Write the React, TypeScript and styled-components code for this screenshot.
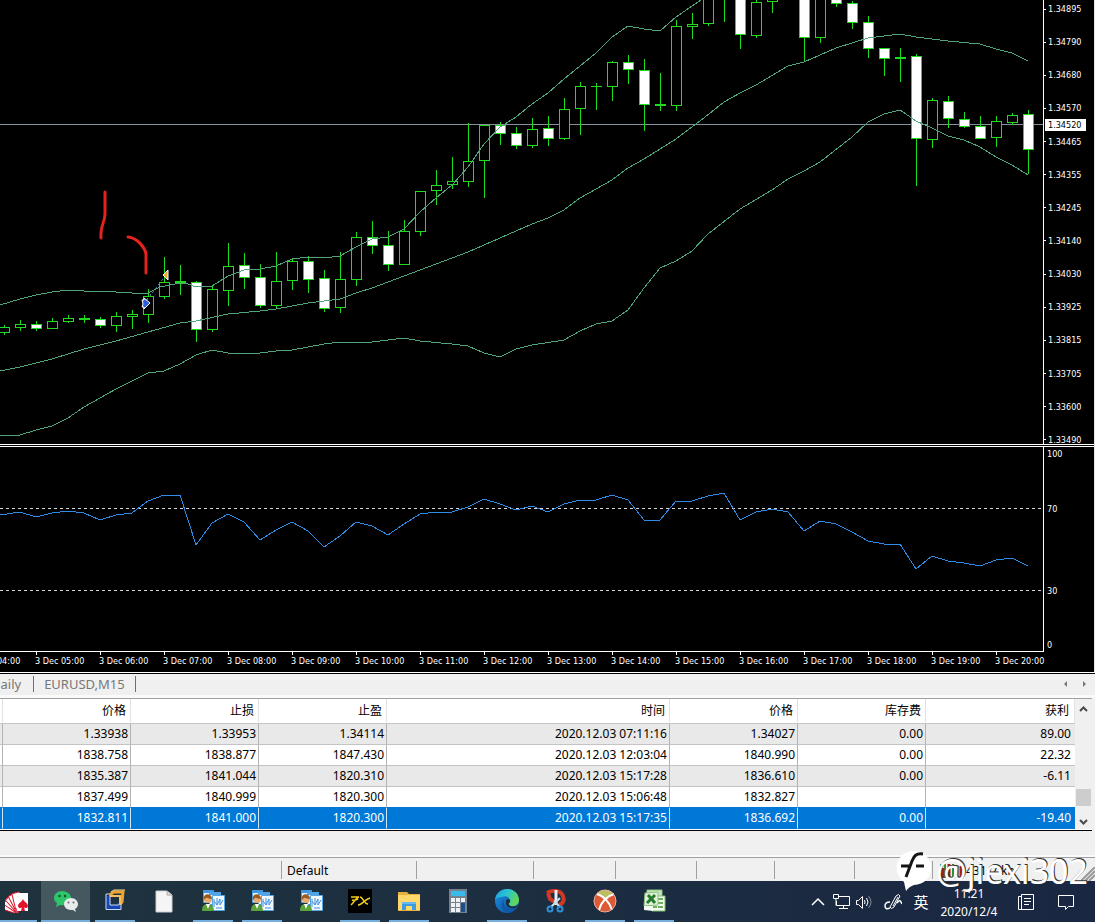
import React from "react";
import styled, { createGlobalStyle } from "styled-components";

const Global = createGlobalStyle`
  *, *::before, *::after { box-sizing: border-box; }
  body {
    margin: 0;
    background: #f0f0f0;
    font-family: "Noto Sans", "Noto Sans CJK SC", sans-serif;
    font-size: 12px;
    color: #000;
  }
  button { font: inherit; color: inherit; background: none; border: 0; padding: 0; margin: 0; }
`;

/* ---------- data ---------- */

type Kind = "up" | "down" | "doji";
type Candle = [x: number, high: number, top: number, bottom: number, low: number, kind: Kind];

const candles: Candle[] = [
  [4, 325, 327, 332, 334, "up"],
  [20, 320, 324, 327, 330, "up"],
  [36, 321, 324, 328, 330, "down"],
  [52, 318, 321, 328, 328, "up"],
  [68, 315, 318, 321, 322, "up"],
  [84, 315, 318, 319, 322, "doji"],
  [100, 317, 319, 325, 327, "down"],
  [116, 312, 316, 325, 331, "up"],
  [132, 310, 314, 316, 328, "up"],
  [148, 289, 296, 314, 322, "up"],
  [164, 257, 282, 296, 298, "up"],
  [180, 265, 281, 282, 294, "doji"],
  [196, 281, 282, 329, 341, "down"],
  [212, 285, 289, 329, 331, "up"],
  [228, 243, 266, 290, 305, "up"],
  [244, 253, 265, 277, 288, "down"],
  [260, 264, 277, 305, 307, "down"],
  [276, 252, 281, 305, 307, "up"],
  [292, 258, 261, 280, 289, "up"],
  [308, 256, 261, 279, 292, "down"],
  [324, 270, 278, 308, 311, "down"],
  [340, 252, 279, 307, 312, "up"],
  [356, 232, 237, 279, 285, "up"],
  [372, 221, 237, 245, 253, "down"],
  [388, 231, 245, 264, 270, "down"],
  [404, 220, 231, 264, 264, "up"],
  [420, 191, 191, 231, 235, "up"],
  [436, 170, 185, 190, 204, "up"],
  [452, 157, 181, 184, 188, "up"],
  [468, 123, 161, 181, 186, "up"],
  [484, 125, 125, 160, 197, "up"],
  [500, 122, 125, 133, 144, "down"],
  [516, 127, 133, 145, 148, "down"],
  [532, 118, 129, 145, 147, "up"],
  [548, 116, 128, 138, 145, "down"],
  [564, 98, 109, 138, 139, "up"],
  [580, 82, 86, 108, 134, "up"],
  [596, 83, 86, 86, 109, "doji"],
  [612, 61, 62, 86, 100, "up"],
  [628, 55, 62, 69, 83, "down"],
  [644, 59, 70, 104, 130, "down"],
  [660, 73, 104, 105, 110, "doji"],
  [676, 20, 26, 105, 110, "up"],
  [692, 13, 24, 26, 38, "up"],
  [708, -6, -5, 23, 25, "up"],
  [724, -6, -5, -2, 21, "up"],
  [740, -6, -5, 34, 48, "down"],
  [756, 0, 2, 35, 37, "up"],
  [772, -6, -5, 1, 12, "up"],
  [804, -6, -5, 37, 60, "down"],
  [820, -6, -5, 37, 42, "up"],
  [836, -6, -5, 3, 6, "down"],
  [852, 1, 3, 22, 28, "down"],
  [868, 16, 22, 48, 57, "down"],
  [884, 48, 48, 58, 75, "down"],
  [900, 48, 57, 58, 81, "doji"],
  [916, 54, 56, 138, 185, "down"],
  [932, 98, 100, 139, 147, "up"],
  [948, 96, 101, 118, 127, "down"],
  [964, 112, 119, 126, 127, "down"],
  [980, 116, 126, 138, 138, "down"],
  [996, 116, 121, 137, 146, "up"],
  [1012, 113, 115, 122, 124, "up"],
  [1028, 110, 114, 149, 173, "down"],
];

const upperBand =
  "0,305 20,299 36,295 52,292 68,290 84,291 100,291 132,293 148,293 160,287 180,283 188,284 196,287 212,286 228,276 244,270 260,269 276,266 292,259 308,257 324,258 340,256 356,247 372,239 388,237 404,229 420,212 436,198 452,185 468,167 484,144 500,127 516,117 532,104 548,93 564,79 580,66 596,53 612,37 628,26 644,29 660,31 676,17 692,6 704,-2";
const middleBand =
  "0,371 20,367 52,359 84,349 116,341 148,332 180,323 196,321 228,314 260,311 276,309 308,303 340,299 356,293 372,288 388,282 404,276 436,264 468,252 484,245 500,238 532,224 548,218 564,210 580,198 612,180 628,168 644,159 676,139 700,121 724,102 740,93 756,85 788,66 804,62 836,48 868,38 900,34 916,37 948,41 980,44 996,49 1012,53 1028,61";
const lowerBand =
  "0,436 20,435 36,430 52,426 68,418 84,407 100,398 116,389 132,381 148,373 164,371 180,364 196,355 212,350 228,353 260,353 276,351 292,350 324,344 340,342 365,343 380,341 404,338 420,341 452,344 468,346 484,353 500,357 516,349 532,345 564,340 580,331 596,324 612,321 628,310 644,288 660,268 676,261 692,251 708,234 740,209 772,190 788,179 804,171 820,162 852,137 868,122 884,114 900,110 916,121 932,128 948,136 964,140 980,147 996,157 1012,165 1028,175";
const rsiLine =
  "0,68 20,65 36,70 52,66 68,64 84,66 100,73 116,68 132,66 148,54 164,48 180,48 196,98 212,76 228,67 244,75 260,93 276,83 292,75 308,84 324,100 340,89 356,75 372,79 388,88 404,77 420,67 436,65 452,65 468,60 484,52 500,57 516,63 532,59 548,65 564,57 580,53 596,53 612,48 628,53 644,73 660,73 676,54 692,54 708,49 724,46 740,73 756,65 772,62 788,65 804,84 820,74 836,77 852,85 868,94 884,97 900,97 916,122 932,109 948,114 964,116 980,119 996,113 1012,111 1028,119";

const prices = [
  "1.34895", "1.34790", "1.34680", "1.34570", "1.34465", "1.34355", "1.34245",
  "1.34140", "1.34030", "1.33925", "1.33815", "1.33705", "1.33600", "1.33490",
];

const hours = Array.from({ length: 17 }, (_, i) => `3 Dec ${String(i + 4).padStart(2, "0")}:00`);

const headers = ["", "价格", "止损", "止盈", "时间", "价格", "库存费", "获利"];
const orders = [
  ["", "1.33938", "1.33953", "1.34114", "2020.12.03 07:11:16", "1.34027", "0.00", "89.00"],
  ["", "1838.758", "1838.877", "1847.430", "2020.12.03 12:03:04", "1840.990", "0.00", "22.32"],
  ["", "1835.387", "1841.044", "1820.310", "2020.12.03 15:17:28", "1836.610", "0.00", "-6.11"],
  ["", "1837.499", "1840.999", "1820.300", "2020.12.03 15:06:48", "1832.827", "", ""],
  ["", "1832.811", "1841.000", "1820.300", "2020.12.03 15:17:35", "1836.692", "0.00", "-19.40"],
];

/* ---------- chart ---------- */

const Page = styled.div`
  display: flex;
  flex-direction: column;
  width: 100%;
  overflow: hidden;
`;

const ChartWindow = styled.section`
  display: grid;
  grid-template-columns: minmax(0, 1fr) 51px;
  background: #000;
  color: #fff;
  border-right: 1px solid #e4e4e4;
  font-family: "DejaVu Sans Condensed", "DejaVu Sans", sans-serif;
  font-size: 9px;
  line-height: 8px;
`;

const Plot = styled.svg<{ $height: number }>`
  display: block;
  width: 100%;
  height: ${(p) => p.$height}px;
  shape-rendering: crispEdges;
`;

const PriceAxis = styled.div`
  position: relative;
  display: flex;
  flex-direction: column;
  justify-content: space-between;
  height: 444px;
  padding-top: 5px;
  border-left: 1px solid #fff;
`;

const PriceTick = styled.div`
  display: flex;
  align-items: center;
  gap: 2px;
  &::before {
    content: "";
    width: 2px;
    height: 1px;
    background: #fff;
  }
`;

const CurrentPrice = styled.output`
  position: absolute;
  top: 119px;
  left: 1px;
  width: 41px;
  padding: 2px 3px;
  background: #fff;
  color: #000;
`;

const Splitter = styled.div`
  grid-column: 1 / -1;
  height: 3px;
  border-top: 1px solid #fff;
  border-bottom: 1px solid #fff;
`;

const RsiAxis = styled.div`
  display: grid;
  grid-template-rows: 55px 82px 54px auto;
  padding: 3px 0 0 3px;
  border-left: 1px solid #fff;
`;

const TimeAxis = styled.div`
  grid-column: 1 / -1;
  height: 21px;
  overflow: hidden;
`;

const TimeLine = styled.div`
  height: 1px;
  margin-right: 50px;
  background: #fff;
`;

const TimeLabels = styled.div`
  display: flex;
  margin-left: -29px;
`;

const TimeLabel = styled.div`
  flex: 0 0 64px;
  white-space: nowrap;
  &::before {
    content: "";
    display: block;
    width: 1px;
    height: 3px;
    margin: 0 0 2px 1px;
    background: #fff;
  }
`;

function CandleShape({ c }: { c: Candle }) {
  const [x, high, top, bottom, low, kind] = c;
  if (kind === "doji") {
    return (
      <g fill="#1fdc1f">
        <rect x={x} y={high} width={1} height={low - high + 1} />
        <rect x={x - 5} y={top} width={11} height={bottom - top + 1} />
      </g>
    );
  }
  return (
    <g>
      <rect x={x} y={high} width={1} height={Math.max(0, top - high)} fill="#1fdc1f" />
      <rect x={x} y={bottom} width={1} height={Math.max(0, low - bottom + 1)} fill="#1fdc1f" />
      <rect
        x={x - 4.5}
        y={top + 0.5}
        width={10}
        height={bottom - top}
        fill={kind === "down" ? "#fff" : "#000"}
        stroke="#1fdc1f"
      />
    </g>
  );
}

function Chart() {
  return (
    <ChartWindow aria-label="EURUSD chart">
      <Plot $height={444} viewBox="0 0 1043 444" preserveAspectRatio="xMaxYMin slice">
        <rect x="0" y="124" width="1043" height="1" fill="#87919c" />
        {candles.map((c) => (
          <CandleShape key={c[0]} c={c} />
        ))}
        <g fill="none" stroke="#4fa67b">
          <polyline points={upperBand} />
          <polyline points={middleBand} />
          <polyline points={lowerBand} />
        </g>
        <path d="M146 301L166 275" stroke="#3f6fb0" strokeDasharray="3 2" />
        <g shapeRendering="auto">
          <path d="M142 300h2v-2l6 5-6 6v-2h-2l1-3z" fill="#2f5fd8" stroke="#fff" />
          <path d="M168 270v10l-5-5z" fill="#f0a830" stroke="#fff" strokeWidth="1" />
          <g fill="none" stroke="#e5231d" strokeWidth="3" strokeLinecap="round">
            <path d="M105 192V214C105 222 100 226 101 238" />
            <path d="M128 237C138 238 145 248 146 254V273" />
          </g>
        </g>
      </Plot>
      <PriceAxis>
        {prices.map((p) => (
          <PriceTick key={p}>{p}</PriceTick>
        ))}
        <CurrentPrice>1.34520</CurrentPrice>
      </PriceAxis>
      <Splitter />
      <Plot $height={204} viewBox="0 0 1043 204" preserveAspectRatio="xMaxYMin slice">
        <g stroke="#d8d8d8" strokeDasharray="3 3">
          <path d="M0 61.5H1043" />
          <path d="M0 143.5H1043" />
        </g>
        <polyline points={rsiLine} fill="none" stroke="#2f8be8" />
      </Plot>
      <RsiAxis>
        <span>100</span>
        <span>70</span>
        <span>30</span>
        <span>0</span>
      </RsiAxis>
      <TimeAxis>
        <TimeLine />
        <TimeLabels>
          {hours.map((h) => (
            <TimeLabel key={h}>{h}</TimeLabel>
          ))}
        </TimeLabels>
      </TimeAxis>
    </ChartWindow>
  );
}

/* ---------- chart tabs ---------- */

const TabBar = styled.nav`
  display: flex;
  align-items: center;
  height: 26px;
  padding: 0 7px 3px 0;
  border-top: 1px solid #fff;
  box-shadow: inset 0 1px 0 #000, inset 0 -3px 0 #fafafa;
  color: #777;
`;

const TabButton = styled.button`
  height: 16px;
  font-size: 13px;
  line-height: 16px;
  padding: 0 10px;
  border-right: 1px solid #6f6f6f;
  &:first-child { margin-left: -19px; padding-right: 12px; }
`;

const TabScroll = styled.div`
  display: flex;
  gap: 13px;
  margin-left: auto;
  button { width: 6px; height: 8px; display: flex; }
`;

/* ---------- order table ---------- */

const Terminal = styled.section`
  display: flex;
  border-top: 1px solid #a0a0a0;
  border-bottom: 1px solid #000;
  background: #fff;
  margin-right: 3px;
  padding-bottom: 1px;
`;

const Table = styled.table`
  flex: 1;
  min-width: 0;
  width: 100%;
  table-layout: fixed;
  border-collapse: separate;
  border-spacing: 0;
  text-align: right;
  line-height: 20px;
`;

const Head = styled.th`
  height: 25px;
  padding: 0 4px 0 0;
  font-weight: 400;
  border-bottom: 1px solid #c4c4c4;
  border-right: 1px solid #e2e2e2;
  line-height: 20px;
  &:last-child { padding-right: 5px; }
`;

const Cell = styled.td`
  height: 21px;
  padding: 0 2px 0 0;
  border-right: 1px solid #b4b4b4;
  border-bottom: 1px solid #c4c4c4;
  white-space: nowrap;
  &:last-child { padding-right: 4px; border-right: 0; }
`;

const Row = styled.tr<{ $shaded?: boolean; $selected?: boolean; $last?: boolean }>`
  background: ${(p) => (p.$selected ? "#0078d7" : p.$shaded ? "#e9e9e9" : "#fff")};
  color: ${(p) => (p.$selected ? "#fff" : "#000")};
  ${Cell} {
    ${(p) => p.$last && "border-bottom-color: #0078d7;"}
    ${(p) => p.$selected && "border-bottom-color: #0078d7; border-right-color: #cfe4f7;"}
  }
`;

const ScrollBar = styled.div`
  display: flex;
  flex-direction: column;
  justify-content: space-between;
  align-items: center;
  flex: 0 0 17px;
  background: #f0f0f0;
  padding: 6px 0 3px;
  button { width: 9px; height: 8px; display: flex; }
`;

const Thumb = styled.div`
  width: 15px;
  height: 17px;
  margin: auto 0 12px;
  background: #cdcdcd;
`;

function Arrow({ d, size }: { d: string; size: [number, number] }) {
  return (
    <svg width={size[0]} height={size[1]} viewBox={`0 0 ${size[0]} ${size[1]}`}>
      <path d={d} fill="none" stroke="#4a4a4a" strokeWidth="2" />
    </svg>
  );
}

/* ---------- status bar ---------- */

const DockGap = styled.div`
  height: 26px;
  border-bottom: 2px solid #fafafa;
`;

const StatusBar = styled.footer`
  position: relative;
  display: flex;
  align-items: stretch;
  height: 24px;
  padding: 3px 0 2px;
  border-top: 1px solid #a0a0a0;
`;

const StatusPane = styled.div<{ $width?: number }>`
  flex: ${(p) => (p.$width ? `0 0 ${p.$width}px` : "1 1 0")};
  min-width: 0;
  padding-left: 5px;
  line-height: 19px;
  border-left: 1px solid #a0a0a0;
  &:first-child { border-left: 0; }
`;

const Traffic = styled.div`
  display: flex;
  align-items: center;
  gap: 3px;
  padding-left: 2px;
`;

const Grip = styled.svg`
  align-self: flex-end;
  flex: none;
  margin-bottom: -2px;
`;

const Watermark = styled.div`
  position: absolute;
  top: -9px;
  right: 7px;
  display: flex;
  align-items: center;
  gap: 5px;
  height: 44px;
  z-index: 2;
  color: #fff;
  font-size: 34px;
  line-height: 36px;
  text-shadow: 1px -1px 0 #333;
  white-space: nowrap;
`;

/* ---------- taskbar ---------- */

const TaskBar = styled.nav`
  display: flex;
  height: 41px;
  background: linear-gradient(90deg, #1f333e, #1c2e40 45%, #1a2742);
  color: #fff;
  overflow: hidden;
`;

const Apps = styled.div`
  display: flex;
  margin-left: -8px;
`;

const AppButton = styled.button<{ $open?: boolean; $active?: boolean }>`
  display: flex;
  flex-direction: column;
  align-items: center;
  width: 49px;
  padding-top: 8px;
  background: ${(p) => (p.$active ? "#45585f" : "transparent")};
  &::after {
    content: "";
    width: ${(p) => (p.$active ? 49 : 40)}px;
    height: 2px;
    margin-top: auto;
    background: ${(p) => (p.$open ? "#76aede" : "transparent")};
  }
`;

const Tray = styled.div`
  display: flex;
  align-items: center;
  margin-left: auto;
  padding-right: 20px;
  button { display: flex; justify-content: center; }
`;

const Ime = styled.button`
  width: 16px;
  margin: 0 10px 0 11px;
  font-family: "Noto Sans CJK SC", sans-serif;
  font-size: 15px;
  line-height: 18px;
`;

const Clock = styled.time`
  width: 60px;
  margin-right: 18px;
  padding-top: 2px;
  text-align: center;
  line-height: 18px;
`;

function Icon({ children }: { children: React.ReactNode }) {
  return (
    <svg width="24" height="24" viewBox="0 0 24 24" aria-hidden="true">
      {children}
    </svg>
  );
}

const Cards = () => (
  <Icon>
    <g fill="#fff" stroke="#d9142a">
      {[-72, -56, -42, -28, -14].map((a) => (
        <rect key={a} x="11" y="3" width="8" height="16" rx="1" transform={`rotate(${a} 16 21)`} />
      ))}
    </g>
    <path d="M12 4h11v18H12z" fill="#fff" />
    <path d="M18 10c1 3 5 4 5 7 0 2-3 3-4 1l1 4h-4l1-4c-1 2-4 1-4-1 0-3 4-4 5-7z" fill="#e3132c" />
  </Icon>
);

const WeChat = () => (
  <Icon>
    <path d="M8 2C3.500 2 0 5 0 9c0 2 1 4 3 5l-1 4 4-2c6 1 11-2 11-7 0-4-4-7-9-7z" fill="#2dc46a" />
    <circle cx="5.500" cy="7" r="1.200" fill="#124d2e" />
    <circle cx="11" cy="7" r="1.200" fill="#124d2e" />
    <path d="M17 9c-4 0-7 3-7 6s3 6 7 6h2l3 2-1-3c2-1 3-3 3-5 0-3-3-6-7-6z" fill="#e9eaec" />
    <circle cx="14.500" cy="13.500" r="1" fill="#666" />
    <circle cx="19.500" cy="13.500" r="1" fill="#666" />
  </Icon>
);

const VmWindows = () => (
  <Icon>
    <path d="M8 8V5l3-2h9l-1 10-3 3" fill="none" stroke="#f0a32f" strokeWidth="3" />
    <path d="M8 3l3-2h11" fill="none" stroke="#ffe0a0" />
    <path d="M5 7v11h11v-4" fill="none" stroke="#1746b4" strokeWidth="4" />
    <path d="M3 5h4M3 5v15.500h15V14M7 6v10h9" fill="none" stroke="#c9dcf7" />
    <path d="M8 7h9v9" fill="none" stroke="#f7bd5f" strokeWidth="2" />
  </Icon>
);

const Blank = () => (
  <Icon>
    <path d="M4 2h11l5 4v17H4z" fill="#f5f5f5" stroke="#c9cdd0" />
    <path d="M15 2v4h5" fill="#ddd" stroke="#aaa" />
  </Icon>
);

const Trader = () => (
  <Icon>
    <path d="M2.500 1.500h10v12h-10z" fill="#e6f2fb" stroke="#4d9fe0" />
    <path d="M2 1h11v3H2z" fill="#3f95df" />
    <path d="M8.500 3.500h11v12h-11z" fill="#eaf4fc" stroke="#4d9fe0" />
    <path d="M8 3h12v3H8z" fill="#4fa3e6" />
    <path d="M11.500 6.500h12v15h-12z" fill="#f1f8fd" stroke="#55a7e3" />
    <path d="M13 10v8M13 12l3 4M16 9v7l3-6M19 10v6l3-5M15 19h6" fill="none" stroke="#3f8fe0" />
    <path d="M1 22c0-5 2-7 5-7s7 1 7 7z" fill="#5ca43a" />
    <path d="M5 15l2 5 2-5z" fill="#fff" />
    <circle cx="7" cy="10" r="4" fill="#e8ac72" />
    <path d="M3 11c-2-7 8-8 8-1-3 0-5-2-6-1z" fill="#9a5a22" />
  </Icon>
);

const Yx = () => (
  <Icon>
    <path d="M0 0h24v24H0z" fill="#000" />
    <path d="M3 8h8c-3 1-5 5-8 8M4 11c3 1 4 0 6-1M10 16c4 0 7-6 12-7M12 8c3 0 4 7 8 7" fill="none" stroke="#f0cb1b" strokeWidth="1.500" />
  </Icon>
);

const Folder = () => (
  <Icon>
    <path d="M1 3h9l2 2h11v17H1z" fill="#e9b13c" />
    <path d="M1 6h22v15H1z" fill="#ffd76a" />
    <path d="M5 21v-8h14v8h-4v-4H9v4z" fill="#3d9be0" />
    <path d="M5 13h14v2H5z" fill="#64b8f0" />
  </Icon>
);

const Calculator = () => (
  <Icon>
    <path d="M3 0h18v24H3z" fill="#75818d" />
    <path d="M5 2h14v5H5z" fill="#39b9ec" />
    <g fill="#edf1f4">
      {[9, 14, 19].map((y) => [5, 10, 15].map((x) => <rect key={`${x}-${y}`} x={x} y={y} width="4" height="4" />))}
    </g>
    <path d="M15 14h4v9h-4z" fill="#1d4f8c" />
  </Icon>
);

const Edge = () => (
  <Icon>
    <defs>
      <linearGradient id="edgeTop" x1="0" y1="0" x2="1" y2="0.400">
        <stop offset="0" stopColor="#1b9de2" />
        <stop offset="0.500" stopColor="#2bc3d2" />
        <stop offset="1" stopColor="#5fd65b" />
      </linearGradient>
      <linearGradient id="edgeBody" x1="0" y1="0" x2="1" y2="1">
        <stop offset="0" stopColor="#1b8ee0" />
        <stop offset="1" stopColor="#0c4f9c" />
      </linearGradient>
    </defs>
    <circle cx="12" cy="12" r="12" fill="url(#edgeBody)" />
    <path d="M0 11C1 4 6 0 12 0c7 0 12 5 12 11 0 4-3 6-6 6-4 0-5-1-4-3 3-5-3-8-7-6-3 0-6 1-7 3z" fill="url(#edgeTop)" />
    <path d="M9 10c-2 6 3 11 9 10 2 0 4-1 4-2-2 4-6 6-10 6-5-1-8-9-3-14z" fill="#0e5aa8" />
    <path d="M11 12c0-2 3-3 4-1 1 3-3 3 0 6 2 1 5 1 8-1-1 3-4 4-7 3-3 0-6-3-5-7z" fill="#1c2f40" />
  </Icon>
);

const Snip = () => (
  <Icon>
    <path d="M3 4c5-3 12-3 15 1 3 5 2 9-3 11M4 4l2 6 5 3" fill="none" stroke="#cf3a25" strokeWidth="4" />
    <path d="M12 1v15" stroke="#e8f0f5" strokeWidth="3" />
    <path d="M16 9L7 18M10 12l6 6" stroke="#cfdde6" strokeWidth="2" />
    <circle cx="6" cy="20" r="2.500" fill="none" stroke="#2f8fd8" strokeWidth="2" />
    <circle cx="16" cy="20" r="2.500" fill="none" stroke="#2f8fd8" strokeWidth="2" />
  </Icon>
);

const XBall = () => (
  <Icon>
    <circle cx="12" cy="12" r="11" fill="#dd5a38" />
    <path d="M4 4c5-4 12-4 16 0l-8 6z" fill="#b9bf5e" />
    <path d="M4 5c7 2 13 9 15 16M21 5C14 7 8 13 6 21" fill="none" stroke="#fff" strokeWidth="2" />
    <circle cx="12" cy="12" r="11" fill="none" stroke="#e9b09c" />
  </Icon>
);

const Excel = () => (
  <Icon>
    <path d="M5 1h15v14H5z" fill="#c8e6c0" stroke="#8cc47e" />
    <path d="M10 7h13v15H10z" fill="#f4faf2" stroke="#7fbd72" />
    <path d="M16 9h5v2h-5zM16 13h5v2h-5zM16 17h5v2h-5zM11 17h4v2h-4z" fill="#6bb05c" />
    <path d="M3 4l13-1v13l-14 1z" fill="#dff1d8" stroke="#8cc47e" />
    <path d="M6 6l7 8M13 6l-8 8" stroke="#267a2c" strokeWidth="3" />
    <path d="M2 17v4l9 1v-5z" fill="#f4faf2" />
  </Icon>
);

const apps: { name: string; icon: () => React.JSX.Element; open?: boolean; active?: boolean }[] = [
  { name: "Solitaire", icon: Cards, open: true },
  { name: "WeChat", icon: WeChat, open: true, active: true },
  { name: "Virtual machines", icon: VmWindows, open: true },
  { name: "Document", icon: Blank },
  { name: "Trader 1", icon: Trader, open: true },
  { name: "Trader 2", icon: Trader, open: true },
  { name: "Trader 3", icon: Trader },
  { name: "YX", icon: Yx, open: true },
  { name: "Explorer", icon: Folder, open: true },
  { name: "Calculator", icon: Calculator },
  { name: "Edge", icon: Edge, open: true },
  { name: "Snipping tool", icon: Snip },
  { name: "X", icon: XBall, open: true },
  { name: "Excel", icon: Excel, open: true },
];

function TrayIcons() {
  return (
    <>
      <button aria-label="Show hidden icons">
        <svg width="14" height="18" viewBox="0 0 14 18" fill="none" stroke="#fff">
          <path d="M1 12l6-6 6 6" strokeWidth="1.500" />
        </svg>
      </button>
      <button aria-label="Network">
        <svg width="31" height="18" viewBox="0 0 31 18" fill="none" stroke="#fff">
          <path d="M13.500 3.500h11v9h-13V8M18.500 12.500v3M14 15.500h9" />
          <path d="M8.500 1.500h5v4h-5zM11 5.500v7" />
        </svg>
      </button>
      <button aria-label="Volume">
        <svg width="16" height="18" viewBox="0 0 16 18" fill="none" stroke="#fff">
          <path d="M.5 7.500h2l4-4v12l-4-4h-2zM8.500 7q1 2 0 4" />
          <path d="M10.500 5q3 4 0 8" />
          <path d="M12.500 3q5 6 0 12" stroke="#7f8896" />
        </svg>
      </button>
      <button aria-label="Pen">
        <svg width="30" height="18" viewBox="0 0 30 18" fill="none" stroke="#fff">
          <path d="M18 14L24 3q3-3 4 0l-6 11q-3 3-4 0zM21 13l5-9" />
          <path d="M18 9q-5 0-5 4t5 2M25 10q3-4 4-1t1 0" strokeWidth="1.500" />
        </svg>
      </button>
    </>
  );
}

export default function App() {
  return (
    <Page>
      <Global />
      <Chart />
      <TabBar>
        <TabButton>Daily</TabButton>
        <TabButton>EURUSD,M15</TabButton>
        <TabScroll>
          <button aria-label="Previous tab">
            <svg width="6" height="8" viewBox="0 0 6 8"><path d="M4 1v6L1 4z" fill="#777" /></svg>
          </button>
          <button aria-label="Next tab">
            <svg width="6" height="8" viewBox="0 0 6 8"><path d="M1 1v6l3-3z" fill="#777" /></svg>
          </button>
        </TabScroll>
      </TabBar>
      <Terminal>
        <Table>
          <colgroup>
            <col width="3" />
            <col width="128" />
            <col width="128" />
            <col width="128" />
            <col />
            <col width="128" />
            <col width="128" />
            <col width="149" />
          </colgroup>
          <thead>
            <tr>
              {headers.map((h, i) => (
                <Head key={i}>{h}</Head>
              ))}
            </tr>
          </thead>
          <tbody>
            {orders.map((r, i) => (
              <Row key={i} $shaded={i % 2 === 0} $selected={i === 4} $last={i === 3}>
                {r.map((v, j) => (
                  <Cell key={j}>{v}</Cell>
                ))}
              </Row>
            ))}
          </tbody>
        </Table>
        <ScrollBar>
          <button aria-label="Scroll up"><Arrow size={[9, 8]} d="M1 6l3.500-3.500L8 6" /></button>
          <Thumb />
          <button aria-label="Scroll down"><Arrow size={[9, 8]} d="M1 2l3.500 3.500L8 2" /></button>
        </ScrollBar>
      </Terminal>
      <DockGap />
      <StatusBar>
        <StatusPane $width={281} />
        <StatusPane $width={135}>Default</StatusPane>
        <StatusPane $width={117} />
        <StatusPane $width={82} />
        <StatusPane $width={81} />
        <StatusPane $width={78} />
        <StatusPane $width={80} />
        <StatusPane $width={78} />
        <StatusPane>
          <Traffic>
            <svg width="23" height="14" viewBox="0 0 23 14">
              <path d="M1 0v14M5 0v14M13 0v14" stroke="#2f8f3a" strokeWidth="2" />
              <path d="M3 4v10M9 0v14M17 2v12M21 2v12" stroke="#a3231c" strokeWidth="3" />
            </svg>
            <span>431/7 kb</span>
          </Traffic>
        </StatusPane>
        <Grip width="14" height="14" viewBox="0 0 14 14">
          <path d="M0 14L14 0M4 14L14 4M8 14l6-6" stroke="#9a9a9a" strokeWidth="2" />
        </Grip>
        <Watermark>
          <svg width="38" height="44" viewBox="0 0 38 44">
            <path d="M20 2a18 17 0 0 1 1 34c-3 1-6 3-8 6l-2-9A17 17 0 0 1 20 2z" fill="#fff" />
            <path d="M30 5c-7-1-9 2-11 7l-6 16M8 17h10M23 17h8" fill="none" stroke="#151515" strokeWidth="3" />
          </svg>
          <span>@jiexi302</span>
        </Watermark>
      </StatusBar>
      <TaskBar>
        <Apps>
          {apps.map(({ name, icon: Glyph, open, active }) => (
            <AppButton key={name} aria-label={name} $open={open} $active={active}>
              <Glyph />
            </AppButton>
          ))}
        </Apps>
        <Tray>
          <TrayIcons />
          <Ime>英</Ime>
          <Clock dateTime="2020-12-04T11:21">
            11:21
            <br />
            2020/12/4
          </Clock>
          <button aria-label="Notes">
            <svg width="18" height="18" viewBox="0 0 18 18" fill="none" stroke="#fff">
              <path d="M4.500 1.500h12v15h-15v-13h3zM4.500 3v13M7 5.500h7M7 8.500h7M7 11.500h5" />
            </svg>
          </button>
          <button aria-label="Notifications">
            <svg width="40" height="18" viewBox="0 0 40 18" fill="none" stroke="#fff">
              <path d="M23.500 2.500h15v11h-5l-3 3v-3h-7z" />
            </svg>
          </button>
        </Tray>
      </TaskBar>
    </Page>
  );
}
